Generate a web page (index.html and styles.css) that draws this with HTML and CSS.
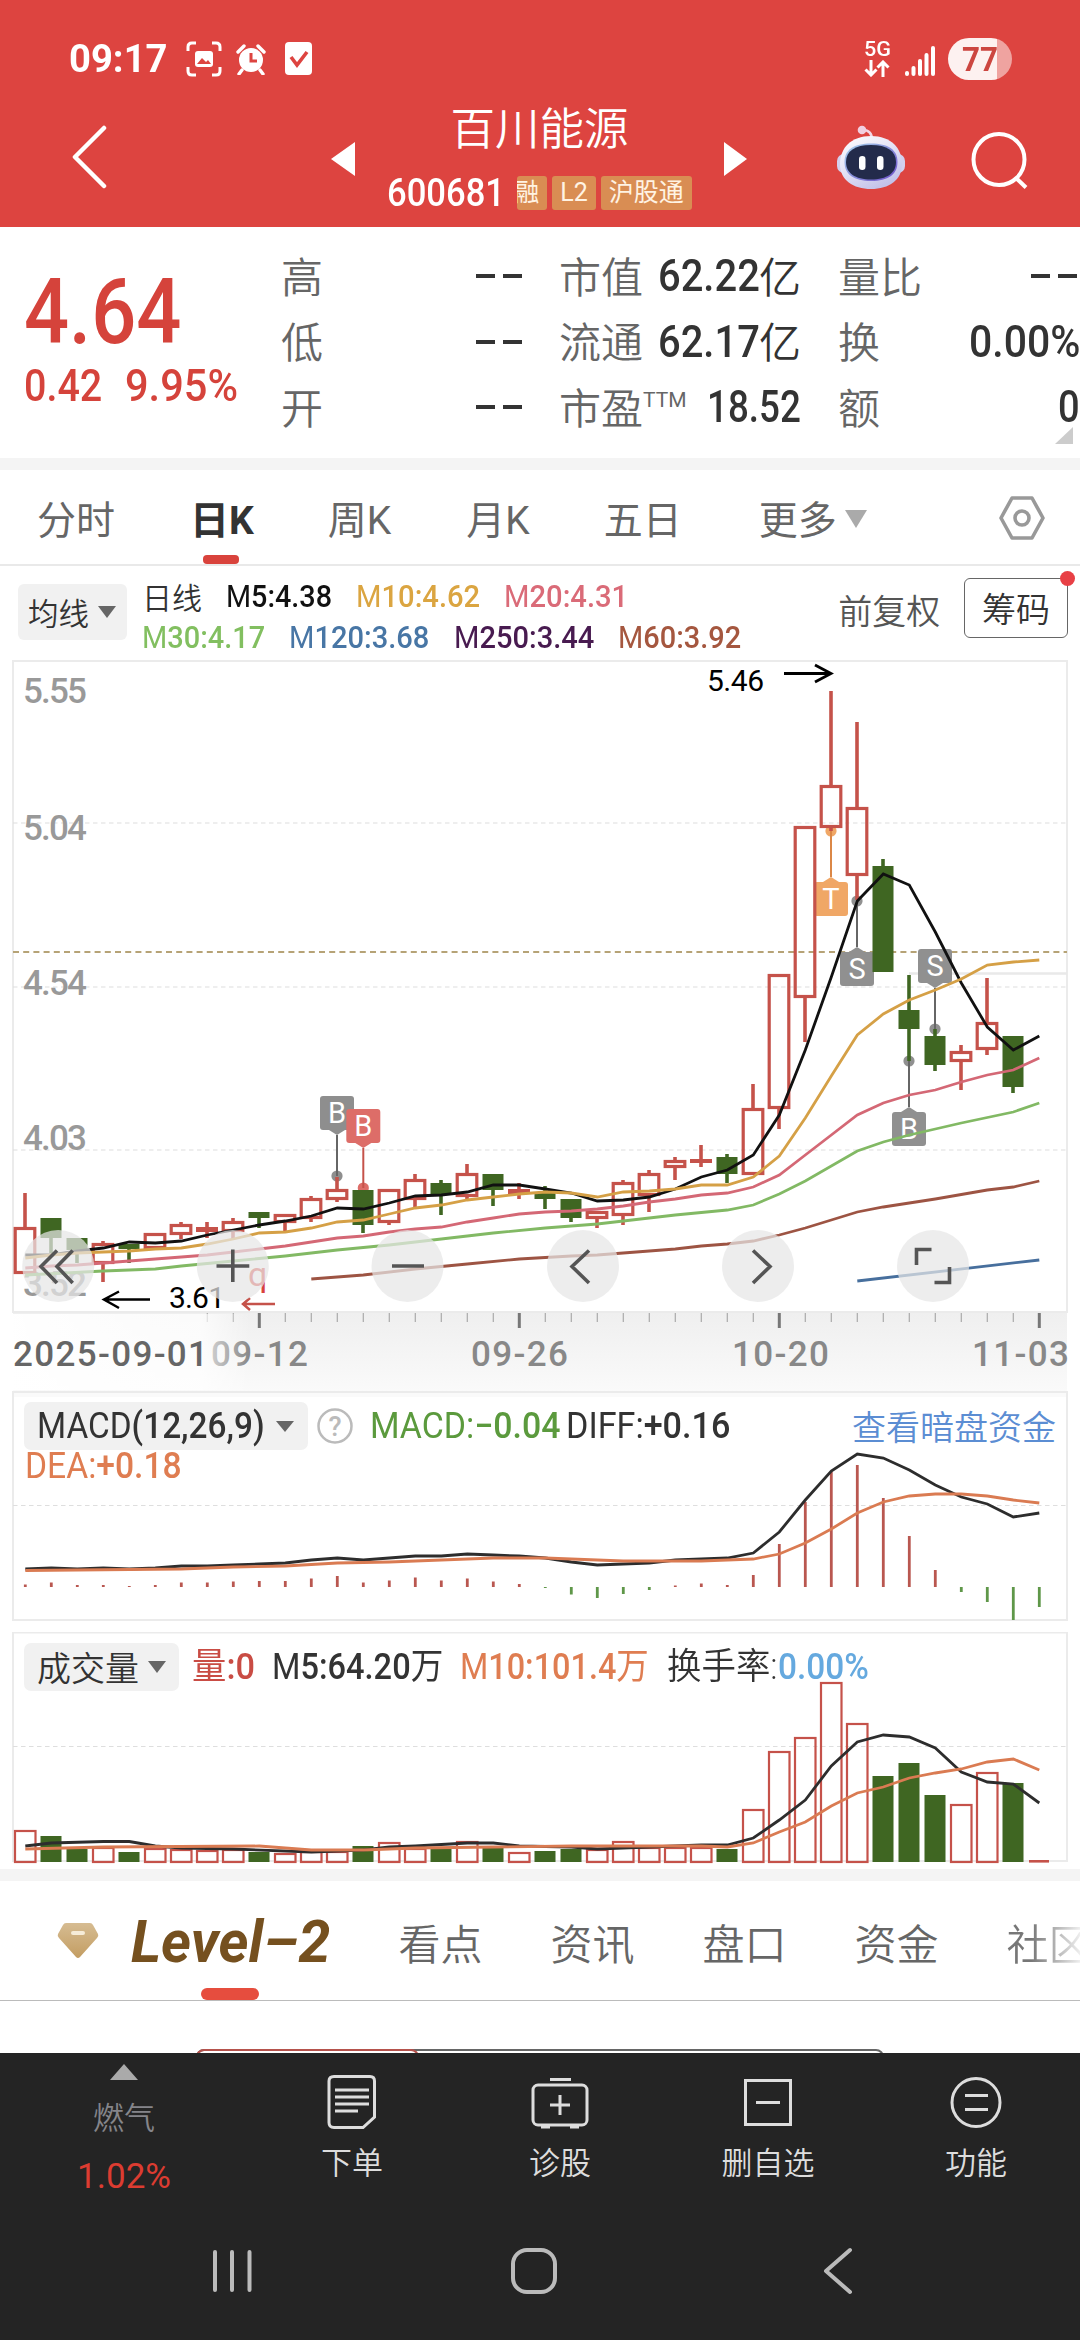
FILE: index.html
```html
<!DOCTYPE html>
<html lang="zh-CN">
<head>
<meta charset="utf-8">
<title>百川能源 600681</title>
<link rel="stylesheet" href="styles.css">
</head>
<body>
<header class="top">
  <div class="status">
    <span class="clock"><span class="fit" data-w="99">09:17</span></span>
    <svg class="st-scan" width="36" height="36" viewBox="0 0 36 36" fill="none" stroke="#fff" stroke-width="3"><path d="M2 10V6q0-4 4-4h4M26 2h4q4 0 4 4v4M34 26v4q0 4-4 4h-4M10 34H6q-4 0-4-4v-4"/><rect x="9" y="10" width="18" height="16" rx="3" fill="#fff" stroke="none"/><path d="M11 23l5-6 4 4 2-2 3 4z" fill="#dd4440" stroke="none"/></svg>
    <svg class="st-alarm" width="30" height="32" viewBox="0 0 30 32"><circle cx="15" cy="17" r="12" fill="#fff"/><path d="M15 10v8h6" fill="none" stroke="#dd4440" stroke-width="3"/><path d="M2 9l6-6M28 9l-6-6M6 27l-3 4M24 27l3 4" stroke="#fff" stroke-width="3.4" stroke-linecap="round"/></svg>
    <svg class="st-check" width="28" height="34" viewBox="0 0 28 34"><rect width="27" height="33" rx="4" fill="#fff"/><path d="M6 15l6 8 10-13" fill="none" stroke="#dd4440" stroke-width="3.6"/></svg>
    <span class="push"></span>
    <div class="net"><span class="fit" data-w="27">5G</span>
      <svg width="26" height="17" viewBox="0 0 26 17" fill="none" stroke="#fff" stroke-width="3"><path d="M7 0v15M1.500 9.500L7 15l5.500-5.500M19 17V2M13.500 7.500L19 2l5.500 5.500"/></svg></div>
    <svg class="signal" width="30" height="30" viewBox="0 0 30 30" fill="#fff"><rect y="25" width="4" height="5" rx="2"/><rect x="6.500" y="20" width="4" height="10" rx="2"/><rect x="13" y="13" width="4" height="17" rx="2"/><rect x="19.500" y="7" width="4" height="23" rx="2"/><rect x="26" width="4" height="30" rx="2"/></svg>
    <div class="battery"><span class="fit" data-w="36">77</span></div>
  </div>
  <div class="title-bar">
    <svg class="back" width="40" height="64" viewBox="0 0 40 64" fill="none" stroke="#fff" stroke-width="4.500"><path d="M35 3L6 32l29 29" stroke-linecap="round" stroke-linejoin="round"/></svg>
    <svg class="prev" width="24" height="34"><path d="M24 0v34L0 17z" fill="#fff"/></svg>
    <div class="stock">
      <h1>百川能源</h1>
      <div class="code-row"><span class="code"><span class="fit" data-w="118">600681</span></span><span class="tag cut">融</span><span class="tag">L2</span><span class="tag">沪股通</span></div>
    </div>
    <svg class="next" width="24" height="34"><path d="M0 0v34l23-17z" fill="#fff"/></svg>
    <svg class="robot" width="70" height="66" viewBox="0 0 70 66">
      <defs><linearGradient id="shell" x1="0" y1="0" x2=".6" y2="1"><stop offset="0" stop-color="#fff"/><stop offset=".5" stop-color="#e6e4f6"/><stop offset="1" stop-color="#c3c2ea"/></linearGradient><linearGradient id="rim" x1="0" y1="0" x2="1" y2="1"><stop offset="0" stop-color="#a8d4ee"/><stop offset="1" stop-color="#6b4cc8"/></linearGradient></defs>
      <path d="M36 15q0-10-9-10" fill="none" stroke="#f4d5e4" stroke-width="2.600" stroke-linecap="round"/><circle cx="26" cy="5" r="4.300" fill="#f1cfe0"/>
      <rect x="1" y="29" width="68" height="19" rx="7" fill="#d3d0ee"/>
      <path d="M35 11c20 0 31 12 31 28S53 64 35 64 4 55 4 39s11-28 31-28z" fill="url(#shell)"/>
      <path d="M35 18.500c17 0 26.500 6 26.500 18.500S52 56 35 56 8.500 49.500 8.500 37 18 18.500 35 18.500z" fill="url(#rim)"/>
      <path d="M35 20c16 0 25 6 25 17s-9 17.500-25 17.500S10 48 10 37s9-17 25-17z" fill="#232b4b"/>
      <rect x="23" y="31" width="6.500" height="14" rx="3.200" fill="#fff"/><rect x="41" y="31" width="6.500" height="14" rx="3.200" fill="#fff"/></svg>
    <svg class="search" width="62" height="62" viewBox="0 0 62 62" fill="none" stroke="#fff" stroke-width="4"><circle cx="30" cy="29.500" r="25.500"/><path d="M47 48l10 9.500"/></svg>
  </div>
</header>

<section class="quote">
  <div class="price">
    <div class="last"><span class="fit" data-w="157">4.64</span></div>
    <div class="delta"><span class="fit" data-w="78">0.42</span><span class="fit" data-w="113">9.95%</span></div>
  </div>
  <dl class="facts">
    <div><dt>高</dt><dd class="none"><i></i><i></i></dd></div>
    <div><dt>市值</dt><dd><span class="fit" data-w="102">62.22</span><b>亿</b></dd></div>
    <div><dt>量比</dt><dd class="none"><i></i><i></i></dd></div>
    <div><dt>低</dt><dd class="none"><i></i><i></i></dd></div>
    <div><dt>流通</dt><dd><span class="fit" data-w="102">62.17</span><b>亿</b></dd></div>
    <div><dt>换</dt><dd><span class="fit" data-w="111">0.00%</span></dd></div>
    <div><dt>开</dt><dd class="none"><i></i><i></i></dd></div>
    <div><dt>市盈<sup>TTM</sup></dt><dd><span class="fit" data-w="94">18.52</span></dd></div>
    <div><dt>额</dt><dd><span class="fit" data-w="22">0</span></dd></div>
  </dl>
  <svg class="expand" width="18" height="17"><path d="M18 0v17H0z" fill="#ccc"/></svg>
</section>

<nav class="periods">
  <a>分时</a><a class="on">日K</a><a>周K</a><a>月K</a><a>五日</a><a class="more">更多<svg width="22" height="18"><path d="M0 0h22L11 18z" fill="#aaa"/></svg></a>
  <svg class="gear" width="46" height="44" viewBox="0 0 46 44" fill="none" stroke="#999" stroke-width="3.600" stroke-linejoin="round"><path d="M13 2h20l11 20-11 20H13L2 22z"/><circle cx="23" cy="22" r="7"/></svg>
</nav>

<section class="ma">
  <div class="chip">均线<svg width="18" height="12"><path d="M0 0h18L9 12z" fill="#666"/></svg></div>
  <div class="ma-list">
    <div class="ma-row"><span class="k">日线</span>
      <span class="m5"><span class="fit" data-w="106"><em>M</em>5:4.38</span></span><span class="m10"><span class="fit" data-w="124"><em>M</em>10:4.62</span></span><span class="m20"><span class="fit" data-w="124"><em>M</em>20:4.31</span></span></div>
    <div class="ma-row">
      <span class="m30"><span class="fit" data-w="123"><em>M</em>30:4.17</span></span><span class="m120"><span class="fit" data-w="140"><em>M</em>120:3.68</span></span><span class="m250"><span class="fit" data-w="140"><em>M</em>250:3.44</span></span><span class="m60"><span class="fit" data-w="123"><em>M</em>60:3.92</span></span></div>
  </div>
  <span class="adjust">前复权</span>
  <span class="chips-btn">筹码</span>
</section>

<svg id="kline" class="kline" viewBox="0 659 1080 732" width="1080" height="732"></svg>

<section class="panel macd">
  <svg id="macd" class="plot" viewBox="0 1391 1080 241" width="1080" height="241"></svg>
  <div class="legend">
    <div class="chip"><span class="fit" data-w="228"><em>MACD</em>(12,26,9)</span><svg width="18" height="11"><path d="M0 0h18L9 11z" fill="#666"/></svg></div>
    <svg class="help" width="36" height="36" viewBox="0 0 36 36"><circle cx="18" cy="18" r="16.500" fill="none" stroke="#bbb" stroke-width="2.500"/><text x="18" y="28" text-anchor="middle" font-family="Roboto, sans-serif" font-size="27" fill="#bbb">?</text></svg>
    <span class="green"><span class="fit" data-w="190"><em>MACD:</em>−0.04</span></span>
    <span class="ink"><span class="fit" data-w="164"><em>DIFF:</em>+0.16</span></span>
    <a class="link">查看暗盘资金</a>
  </div>
  <div class="dea"><span class="fit" data-w="157"><em>DEA:</em>+0.18</span></div>
</section>

<section class="panel volume">
  <svg id="volume" class="plot" viewBox="0 1632 1080 237" width="1080" height="237"></svg>
  <div class="legend">
    <div class="chip">成交量<svg width="18" height="12"><path d="M0 0h18L9 12z" fill="#666"/></svg></div>
    <span class="red"><span class="fit" data-w="63"><em>量</em>:0</span></span>
    <span class="ink"><span class="fit" data-w="171"><em>M</em>5:64.20<em>万</em></span></span>
    <span class="orange"><span class="fit" data-w="189"><em>M</em>10:101.4<em>万</em></span></span>
    <span class="ink rate"><span class="fit" data-w="111">换手率:</span></span>
    <span class="blue"><span class="fit" data-w="91">0.00%</span></span>
  </div>
</section>

<nav class="topics">
  <svg class="gem" width="42" height="38" viewBox="0 0 42 38"><defs><linearGradient id="gold" x1="0" y1="0" x2="0" y2="1"><stop offset="0" stop-color="#d6bc92"/><stop offset="1" stop-color="#c39d62"/></linearGradient></defs><path d="M9 1h24q2 0 3 2l5 9q1 2-1 4L23 35q-2 2-4 0L2 16q-2-2-1-4l5-9q1-2 3-2z" fill="url(#gold)"/><rect x="14" y="9" width="14" height="4" rx="2" fill="#f6ecd8"/></svg>
  <a class="level"><span class="fit" data-w="199">Level–2</span></a>
  <a>看点</a><a>资讯</a><a>盘口</a><a>资金</a><a class="fade">社区</a>
</nav>
<div class="sheet"><div class="seg"><i></i></div></div>

<footer class="dock">
  <div class="actions">
    <div class="sector"><svg width="28" height="16"><path d="M14 0l14 16H0z" fill="#aaa"/></svg><span>燃气</span><b>1.02%</b></div>
    <div class="act"><svg width="60" height="56" viewBox="0 0 60 56" fill="none" stroke="#ddd" stroke-width="3"><path d="M12 2.500h36q4.500 0 4.500 4.500v36L41 53.500H12q-5 0-5-5V7q0-4.500 5-4.500z"/><path d="M13 16h34M13 23h34M13 30h34M13 37h23"/></svg>下单</div>
    <div class="act"><svg width="60" height="56" viewBox="0 0 60 56" fill="none" stroke="#ddd" stroke-width="3"><rect x="3" y="11" width="54" height="40" rx="5"/><path d="M20 5.500h21M30 21v20M20 31h20M11 53h9M40 53h9"/></svg>诊股</div>
    <div class="act"><svg width="60" height="56" viewBox="0 0 60 56" fill="none" stroke="#ddd" stroke-width="3"><rect x="7.500" y="6.500" width="45" height="44"/><path d="M18 28.500h24"/></svg>删自选</div>
    <div class="act"><svg width="60" height="56" viewBox="0 0 60 56" fill="none" stroke="#ddd" stroke-width="3"><circle cx="30" cy="28.500" r="24"/><path d="M19 21.500h23M19 35.500h23"/></svg>功能</div>
  </div>
  <div class="sysnav">
    <svg width="40" height="46" viewBox="0 0 40 46" stroke="#bbb" stroke-width="4" stroke-linecap="round"><path d="M3 4v38M20 4v38M37.500 4v38"/></svg>
    <svg width="48" height="48" viewBox="0 0 48 48" fill="none" stroke="#bbb" stroke-width="4"><rect x="3" y="3" width="42" height="42" rx="14"/></svg>
    <svg width="30" height="48" viewBox="0 0 30 48" fill="none" stroke="#bbb" stroke-width="4" stroke-linecap="round" stroke-linejoin="round"><path d="M27 3L3 24l24 21"/></svg>
  </div>
</footer>
<script src="charts.js"></script>
</body>
</html>
```
FILE: styles.css
```css
* { box-sizing: border-box; }
body { margin: 0; width: 1080px; height: 2340px; overflow: hidden; background: #fff; color: #333; font-family: Roboto, "Noto Sans CJK SC", sans-serif; display: flex; flex-direction: column; }
svg { display: block; flex: none; }
em, i, b { font-style: normal; }
em { font-weight: 400; }
.fit { display: inline-block; white-space: nowrap; transform-origin: left center; }

.top { height: 227px; flex: none; background: #dd4440; color: #fff; }
.status { height: 80px; padding: 38px 68px 0 69px; display: flex; align-items: center; }
.clock { font: 700 39px/42px Roboto; width: 117px; }
.st-scan { margin-right: 14px; }
.st-alarm { margin-right: 19px; }
.push { flex: 1; }
.net { width: 41px; font: 500 20px/16px Roboto; display: flex; flex-direction: column; align-items: flex-start; gap: 3px; margin-top: -1px; }
.signal { margin-right: 13px; margin-top: 3px; }
.battery { width: 64px; height: 42px; border-radius: 21px; padding-left: 14px; background: linear-gradient(90deg, #fdf1f0 49px, #efa3a0 49px); color: #cc4640; font: 700 34px/43px Roboto; }
.title-bar { height: 147px; display: flex; padding-left: 69px; }
.back { margin-top: 45px; }
.prev { margin: 62px 0 0 222px; }
.stock { width: 369px; height: 147px; display: flex; flex-direction: column; align-items: center; }
h1 { margin: 15px 0 0; font: 350 44.500px/62px "Noto Sans CJK SC"; }
.code-row { display: flex; align-items: center; height: 34px; margin-top: 19px; gap: 5px; }
.code { font: 500 39px/34px Roboto; margin-right: 7px; }
.tag { height: 34px; padding: 0 8px; border-radius: 3px; background: #d98d53; color: #fff3e3; font: 400 25px/33px Roboto, "Noto Sans CJK SC"; }
.cut { width: 30px; padding: 0; direction: rtl; overflow: hidden; padding-right: 8px; }
.next { margin-top: 62px; }
.robot { margin: 45px 0 0 88px; }
.search { margin: 50px 0 0 63px; }

.quote { height: 243px; flex: none; position: relative; border-bottom: 12px solid #f4f4f4; padding: 15px 0 0 24px; display: flex; }
.price { width: 257px; color: #d5433b; }
.last { font: 500 90px/106px Roboto; padding-top: 18px; height: 121px; }
.delta { font: 500 44.500px/47px Roboto; display: flex; gap: 23px; }
.facts { margin: 0; width: 799px; display: grid; grid-template-columns: 241px 242px 242px; column-gap: 37px; grid-auto-rows: 65.500px; }
.facts div { display: flex; align-items: center; justify-content: space-between; }
dt { font: 350 42px/60px "Noto Sans CJK SC"; color: #666; white-space: nowrap; }
sup { font: 400 21px/20px Roboto; position: relative; top: -2px; }
dd { margin: 3px 0 0; display: flex; align-items: center; font: 500 45px/60px Roboto; color: #333; }
dd b { font: 350 42px/60px "Noto Sans CJK SC"; margin: -3px 0 0 -1px; }
.none { gap: 8px; }
.none i { width: 19px; height: 4px; background: #333; }
.facts div:nth-child(3) dd { margin-right: 3px; }
.expand { position: absolute; right: 7px; bottom: 14px; }

.periods { height: 96px; flex: none; border-bottom: 2px solid #e9e9e9; padding-left: 37px; display: flex; align-items: center; font: 400 39px/58px Roboto, "Noto Sans CJK SC"; color: #666; }
.periods a { margin-right: 75px; height: 94px; line-height: 103px; position: relative; white-space: nowrap; }
.periods .on { color: #333; font-weight: 700; margin-right: 74px; }
.periods a:nth-child(3) { margin-right: 75px; }
.periods a:nth-child(4) { margin-right: 74px; }
.on::after { content: ""; position: absolute; left: 13px; bottom: 0; width: 36px; height: 9px; border-radius: 4px; background: #d9433c; }
.periods a:nth-child(5) { margin-right: 77px; }
.periods .more { display: flex; align-items: flex-start; gap: 8px; margin-right: 0; }
.more svg { margin-top: 40px; }
.gear { margin: 2px 35px 0 auto; }

.ma { height: 93px; flex: none; padding: 12px 12px 0 18px; display: flex; align-items: flex-start; }
.chip { background: #f1f1f1; border-radius: 6px; display: flex; align-items: center; white-space: nowrap; color: #333; }
.ma .chip { width: 109px; height: 56px; margin-top: 6px; padding-left: 10px; gap: 9px; font: 350 30.500px/50px "Noto Sans CJK SC"; }
.ma-list { width: 684px; padding-left: 15px; font: 500 32px/42px Roboto; }
.ma-row { display: flex; gap: 24px; height: 41px; line-height: 36px; }
.k { font: 350 30px/36px "Noto Sans CJK SC"; }
.m5 { color: #111; } .m10 { color: #dba541; } .m20 { color: #da6b78; } .m30 { color: #82bf60; } .m120 { color: #4876a5; } .m250 { color: #481b50; } .m60 { color: #a5573f; }
.adjust { font: 350 34px/64px "Noto Sans CJK SC"; color: #555; margin-left: 28px; width: 126px; white-space: nowrap; }
.chips-btn { width: 104px; height: 60px; border: 1.500px solid #666; border-radius: 6px; text-align: center; font: 350 34px/58px "Noto Sans CJK SC"; position: relative; }
.chips-btn::after { content: ""; position: absolute; right: -8px; top: -8px; width: 15px; height: 15px; border-radius: 50%; background: #e84045; }

.kline { font-family: Roboto, sans-serif; }
.panel { position: relative; flex: none; padding-top: 11px; }
.macd { height: 241px; } .volume { height: 237px; }
.plot { position: absolute; left: 0; top: 0; }
.legend { position: relative; display: flex; align-items: center; height: 48px; margin: 0 24px; font: 500 36px/50px Roboto, "Noto Sans CJK SC"; width: 1032px; }
.legend .chip { height: 48px; border-radius: 7px; padding: 0 14px 0 13px; }
.macd .chip { gap: 11px; margin-right: 9px; width: 284px; }
.help { margin-right: 17px; }
.green { color: #5b9a3d; margin-right: 6px; }
.ink { color: #333; } .red { color: #c94c44; margin: 0 17px 0 13px; } .orange { color: #df7d51; margin: 0 18px 0 17px; } .blue { color: #65a9df; }
.rate { font-weight: 350; }
.link { margin-left: auto; font: 350 34px/48px "Noto Sans CJK SC"; color: #5b8dd3; }
.dea { position: relative; color: #df7d51; font: 500 36px/42px Roboto; margin: -5px 0 0 25px; }
.volume .chip { font: 350 34px/48px "Noto Sans CJK SC"; gap: 9px; width: 155px; }

.topics { height: 132px; flex: none; border-top: 12px solid #f4f4f4; border-bottom: 1px solid #bbb; display: flex; font: 350 42px/122px "Noto Sans CJK SC"; color: #666; padding-left: 57px; position: relative; overflow: hidden; }
.topics a { margin-right: 68px; white-space: nowrap; }
.gem { margin: 41px 32px 0 0; }
.topics .level { font: 700 italic 59px/121px Roboto; color: #75501f; position: relative; margin-right: 68px; }
.level::after { content: ""; position: absolute; left: 70px; bottom: 0; width: 58px; height: 12px; border-radius: 6px; background: #e64d3e; }
.topics .fade { background: linear-gradient(90deg, #777 25px, #eee 74px); -webkit-background-clip: text; background-clip: text; color: transparent; }
.sheet { height: 52px; flex: none; padding: 48px 0 0 196px; overflow: hidden; }
.seg { width: 688px; height: 20px; border: 2px solid #666; border-radius: 8px; }
.seg i { display: block; width: 223px; height: 20px; margin: -2px; border: 2px solid #b5524c; border-radius: 8px; }

.dock { flex: 1; background: #242424; color: #ddd; }
.actions { height: 152px; display: flex; padding-left: 20px; }
.sector, .act { width: 208px; display: flex; flex-direction: column; align-items: center; font: 350 31px/46px "Noto Sans CJK SC"; }
.act { padding-top: 21px; }
.act svg { margin-bottom: 8px; }
.sector { padding-top: 11px; color: #85858a; margin-right: 20px; }
.sector span { margin-top: 13px; }
.sector b { font: 400 35px/40px Roboto; color: #dc3c31; margin-top: 18px; }
.sysnav { height: 132px; display: flex; align-items: center; padding-left: 212px; }
.sysnav svg:nth-child(2) { margin-left: 258px; }
.sysnav svg:nth-child(3) { margin-left: 265px; }
```
FILE: charts.js
```js
// Squeeze each numeric label to the width of the condensed digits.
document.querySelectorAll('.fit').forEach(function (el) {
  var w = +el.dataset.w, n = el.offsetWidth;
  el.style.transform = 'scaleX(' + w / n + ')';
  el.style.marginRight = (w - n) + 'px';
});

var RED = '#c5524a', GREEN = '#3f6622', GRAY = '#999';
function X(i) { return 25.3 + 26 * i; }
function line(x1, y1, x2, y2, c, w, extra) { return '<path d="M' + x1 + ' ' + y1 + 'L' + x2 + ' ' + y2 + '" fill="none" stroke="' + c + '" stroke-width="' + w + '" ' + (extra || '') + '/>'; }
function path(d, c, w) { return '<path d="' + d + '" fill="none" stroke="' + c + '" stroke-width="' + w + '"/>'; }
function series(start, ys, c) {
  return '<polyline fill="none" stroke="' + c + '" stroke-width="2.8" points="' + ys.map(function (y, k) { return X(start + k) + ',' + y; }).join(' ') + '"/>';
}
function sparse(pts, c) {
  return '<polyline fill="none" stroke="' + c + '" stroke-width="2.8" points="' + pts.map(function (p) { return X(p[0]) + ',' + p[1]; }).join(' ') + '"/>';
}
function rect(x, y, w, h, f, extra) { return '<rect x="' + x + '" y="' + y + '" width="' + w + '" height="' + h + '" fill="' + f + '" ' + (extra || '') + '/>'; }
function text(s, x, y, w, size, c, extra) { return '<text x="' + x + '" y="' + y + '" font-size="' + size + '" fill="' + c + '" textLength="' + w + '" lengthAdjust="spacing" ' + (extra || '') + '>' + s + '</text>'; }
function frame(y1, y2) { return rect(13, y1, 1054, y2 - y1, 'none', 'stroke="#ebebeb" stroke-width="2"'); }
function dash(y) { return line(13, y, 1067, y, '#dedede', 1.2, 'stroke-dasharray="4.5 3.5"'); }

// kind, high, top, bottom, low
var candles = [
  ['r', 1193, 1227, 1274, 1274], ['g', 1218, 1218, 1238, 1253], ['g', 1238, 1238, 1250, 1263], ['r', 1241, 1243, 1264, 1282],
  ['g', 1244, 1244, 1249, 1263], ['r', 1233, 1233, 1249, 1249], ['r', 1222, 1224, 1235, 1239], ['r', 1222, 1227, 1232, 1238],
  ['r', 1218, 1221, 1232, 1240], ['g', 1212, 1212, 1218, 1228], ['r', 1214, 1214, 1223, 1231], ['r', 1196, 1198, 1219, 1222],
  ['r', 1177, 1189, 1200, 1202], ['g', 1190, 1190, 1225, 1233], ['r', 1189, 1189, 1223, 1225], ['r', 1174, 1179, 1200, 1207],
  ['g', 1180, 1183, 1195, 1215], ['r', 1164, 1173, 1197, 1199], ['g', 1174, 1174, 1190, 1206], ['r', 1183, 1189, 1194, 1199],
  ['g', 1186, 1192, 1199, 1209], ['g', 1199, 1199, 1218, 1222], ['r', 1211, 1211, 1219, 1228], ['r', 1180, 1182, 1216, 1225],
  ['r', 1170, 1173, 1196, 1212], ['r', 1157, 1160, 1168, 1180], ['r', 1145, 1159, 1163, 1167], ['g', 1154, 1157, 1174, 1183],
  ['r', 1084, 1108, 1175, 1175], ['r', 974, 974, 1109, 1129], ['r', 826, 826, 998, 1042], ['r', 691, 785, 828, 831],
  ['r', 722, 807, 876, 900], ['g', 859, 866, 972, 972], ['g', 975, 1010, 1029, 1061], ['g', 1029, 1036, 1065, 1071],
  ['r', 1045, 1051, 1062, 1090], ['r', 978, 1022, 1050, 1055], ['g', 1036, 1036, 1087, 1093]
];
function candle(c, i) {
  var x = X(i) - 0.3, col = c[0] === 'r' ? RED : GREEN, s = '';
  if (c[1] < c[2]) s += line(x, c[1], x, c[2] + 1, col, 3.6);
  if (c[4] > c[3]) s += line(x, c[3] - 1, x, c[4], col, 3.6);
  if (c[0] === 'g') return s + rect(x - 10.5, c[2], 21, c[3] - c[2], col);
  if (c[3] - c[2] < 6) return s + rect(x - 11, c[2], 22, c[3] - c[2], col);
  return s + rect(x - 9.8, c[2] + 1.5, 19.6, c[3] - c[2] - 3, 'none', 'stroke="' + col + '" stroke-width="3.2"');
}
function marker(letter, x, top, dotY, c, stem) {
  var up = dotY < top, tip = up ? top - 5 : top + 39, base = up ? top : top + 34;
  return '<circle cx="' + x + '" cy="' + dotY + '" r="5.600" fill="' + c + '"/>' + line(x, dotY, x, tip, stem, 2)
    + rect(x - 17, top, 34, 34, c, 'rx="3"')
    + '<path d="M' + (x - 8) + ' ' + base + 'H' + (x + 8) + 'L' + x + ' ' + tip + 'z" fill="' + c + '"/>'
    + '<text x="' + x + '" y="' + (top + 27) + '" font-size="29" fill="#fff" text-anchor="middle">' + letter + '</text>';
}

var k = '<defs><linearGradient id="axis" x1="0" y1="0" x2="0" y2="1"><stop offset="0" stop-color="#efefef"/><stop offset="1" stop-color="#fafafa"/></linearGradient>'
  + '<linearGradient id="fade" x1="0" y1="0" x2="1" y2="0"><stop offset="0" stop-color="#fff"/><stop offset=".55" stop-color="#fff" stop-opacity=".8"/><stop offset=".8" stop-color="#fff" stop-opacity=".75"/><stop offset="1" stop-color="#fff" stop-opacity="0"/></linearGradient></defs>';
k += rect(13, 1313, 1054, 78, 'url(#axis)');
k += frame(661, 1312) + dash(823) + dash(987) + dash(1150);
k += line(13, 952, 1067, 952, '#b6a376', 1.8, 'stroke-dasharray="6 4.200"') + line(909, 973.500, 1067, 973.500, '#e9e9e9', 2.500);
[['5.55', 703], ['5.04', 840], ['4.54', 995], ['4.03', 1150], ['3.52', 1296]].forEach(function (l) { k += text(l[0], 23, l[1], 64, 35, GRAY, 'font-weight="500"'); });
k += marker('B', 337, 1096, 1176, '#8e8e8e', '#666') + marker('B', 363.300, 1109, 1188, '#dd6d68', '#c5524a');
k += marker('T', 831, 882, 831, '#f0a766', '#db8746') + marker('S', 857, 952, 901, '#909090', '#666');
k += marker('S', 935, 949, 1029, '#909090', '#666') + marker('B', 909, 1112, 1061, '#909090', '#666');
k += candles.map(candle).join('');
k += series(0, [1255, 1255, 1251, 1248, 1242, 1243, 1241, 1235, 1230, 1225, 1221, 1216, 1208, 1209, 1203, 1196, 1195, 1192, 1185, 1185, 1189, 1193, 1201, 1200, 1197, 1189, 1177, 1170, 1155, 1115, 1050, 977, 901, 874, 885, 932, 983, 1027, 1050, 1036], '#111');
k += series(0, [1258, 1255, 1253, 1252, 1251, 1249, 1248, 1244, 1239, 1233, 1232, 1228, 1222, 1220, 1214, 1208, 1205, 1200, 1197, 1194, 1192, 1193, 1197, 1192, 1191, 1189, 1185, 1185, 1177, 1156, 1118, 1076, 1035, 1014, 1000, 990, 979, 965, 962, 960], '#d5a046');
k += series(0, [1268, 1266, 1265, 1263, 1261, 1259, 1257, 1255, 1252, 1249, 1246, 1242, 1238, 1236, 1232, 1229, 1227, 1222, 1218, 1214, 1212, 1211, 1209, 1206, 1202, 1199, 1195, 1193, 1187, 1175, 1155, 1135, 1115, 1103, 1095, 1090, 1082, 1075, 1070, 1058], '#d46875');
k += sparse([[0, 1275], [3, 1271], [5, 1269], [6, 1266], [8, 1261], [10, 1256], [12, 1250], [14, 1245], [16, 1239], [18, 1233], [20, 1228], [22, 1224], [25, 1215], [27, 1210], [28, 1205], [29, 1194], [30, 1181], [32, 1151], [33, 1142], [34, 1135], [36, 1123], [38, 1112], [39, 1103]], '#82b964');
k += sparse([[11, 1279], [13, 1275], [15, 1269], [17, 1264], [19, 1259], [21, 1256], [22, 1255], [23, 1253], [25, 1249], [26, 1246], [27, 1244], [28, 1241], [29, 1235], [30, 1228], [32, 1212], [33, 1207], [35, 1199], [37, 1190], [38, 1187], [39, 1181]], '#9d5443');
k += sparse([[32, 1281], [39, 1260]], '#476f9d');
k += text('5.46', 707, 691, 57, 30, '#000') + path('M784 673.500H831M815 665L831 673.500L815 682', '#000', 2.800);
k += text('3.61', 169, 1308, 56, 30, '#000') + path('M150 1299.500H104M119 1291.500L104 1299.500L119 1308', '#000', 2.500);
k += '<text x="248" y="1286" font-size="34" fill="#d9433c">q</text>' + path('M275 1304H243M250 1298L243 1304L250 1310', '#c5524a', 2.500);
[58.2, 232.8, 407.5, 583, 758, 933].forEach(function (x) { k += '<circle cx="' + x + '" cy="1266" r="36" fill="#e6e6e6" fill-opacity=".72"/>'; });
k += path('M57 1250.500L41 1266.500L57 1283M72.700 1250.500L57 1266.500L72.700 1283M216.500 1266H249.300M232.800 1249.500V1282M392 1266H424M589 1250.500L572 1266.500L589 1283M753 1250.500L770 1266.500L753 1283M931.500 1249.500H916.500V1265M949.500 1267V1282.500H934.500', '#555', 3.600);
for (var t = 7; t < 40; t++) { var major = t % 10 === 9; k += line(X(t), 1313, X(t), major ? 1328 : 1322, major ? '#777' : '#aaa', major ? 3 : 1.200); }
k += text('09-12', 211, 1366, 97, 35, '#888', 'font-weight="500"');
k += rect(0, 1314, 250, 76, 'url(#fade)');
k += text('2025-09-01', 13, 1366, 195, 35, '#666', 'font-weight="500"');
k += text('09-26', 471, 1366, 97, 35, '#888', 'font-weight="500"') + text('10-20', 732, 1366, 97, 35, '#888', 'font-weight="500"') + text('11-03', 972, 1366, 97, 35, '#888', 'font-weight="500"');
document.getElementById('kline').innerHTML = k;

var hist = [2.5, 4.5, 2, 2, 1, 2, 4.5, 4.5, 5.5, 6, 6, 8.5, 11, 4.5, 6.5, 9.5, 6.5, 8.5, 5.5, 3, -1, -7.5, -11, -7, -3, 1.5, 3.5, 2, 12, 43, 85, 115, 122, 89, 51, 17, -5, -15, -33, -20];
var m = rect(13, 1391, 1054, 6, '#fafafa') + frame(1392, 1620) + dash(1505.500);
m += hist.map(function (v, i) { return rect(X(i) - 1.4, v > 0 ? 1587 - v : 1587, 2.8, Math.abs(v), v > 0 ? '#b95750' : '#5f9749'); }).join('');
m += series(0, [1569, 1568, 1569, 1568, 1569, 1568, 1566, 1566, 1565, 1564, 1563, 1560, 1558, 1560, 1558, 1556, 1556, 1554, 1555, 1556, 1558, 1562, 1565, 1564, 1563, 1560, 1559, 1558, 1553, 1532, 1500, 1471, 1454, 1458, 1470, 1485, 1497, 1504, 1517, 1513], '#2d2d2d');
m += sparse([[0, 1570.5], [2, 1570], [6, 1569], [8, 1567], [10, 1566], [12, 1563], [14, 1562], [16, 1560], [18, 1558], [20, 1558], [22, 1560], [23, 1561], [26, 1561], [28, 1559], [29, 1554], [30, 1543], [31, 1529], [32, 1513], [33, 1502], [34, 1496], [35, 1494], [36, 1494], [37, 1496], [38, 1500], [39, 1503]], '#da7b52');
document.getElementById('macd').innerHTML = m;

var tops = [1830, 1836, 1849, 1847, 1852, 1848, 1849, 1850, 1849, 1852, 1853, 1851, 1851, 1846, 1842, 1848, 1848, 1841, 1848, 1852, 1851, 1849, 1849, 1841, 1847, 1847, 1847, 1849, 1809, 1751, 1737, 1682, 1723, 1776, 1763, 1795, 1804, 1772, 1783];
var v = frame(1632.5, 1861) + dash(1746.500);
v += tops.map(function (y, i) {
  var x = X(i) - 0.3;
  return candles[i][0] === 'g' ? rect(x - 10.5, y, 21, 1862 - y, GREEN) : rect(x - 10, y + 1, 20.5, 1861 - y, 'none', 'stroke="' + RED + '" stroke-width="2.2"');
}).join('') + rect(1029, 1860, 20, 2.6, RED);
v += sparse([[0, 1846], [1, 1843], [3, 1841.500], [4, 1841.500], [5, 1846], [6, 1848], [8, 1849], [11, 1852], [13, 1850], [14, 1847], [15, 1846], [17, 1843], [18, 1843], [19, 1846], [21, 1847], [22, 1849], [24, 1847], [26, 1845], [27, 1845], [28, 1838], [29, 1820], [30, 1800], [31, 1766], [32, 1742], [33, 1735], [34, 1737], [35, 1748], [36, 1772], [37, 1782], [38, 1784], [39, 1803]], '#2d2d2d');
v += sparse([[0, 1849], [3, 1847], [9, 1846], [11, 1850], [13, 1850], [15, 1848], [18, 1847], [21, 1846], [26, 1846], [27, 1847], [28, 1843], [29, 1832], [30, 1822], [31, 1806], [32, 1793], [33, 1787], [34, 1778], [35, 1773], [36, 1769], [37, 1762], [38, 1759], [39, 1770]], '#da7b52');
document.getElementById('volume').innerHTML = v;
```
